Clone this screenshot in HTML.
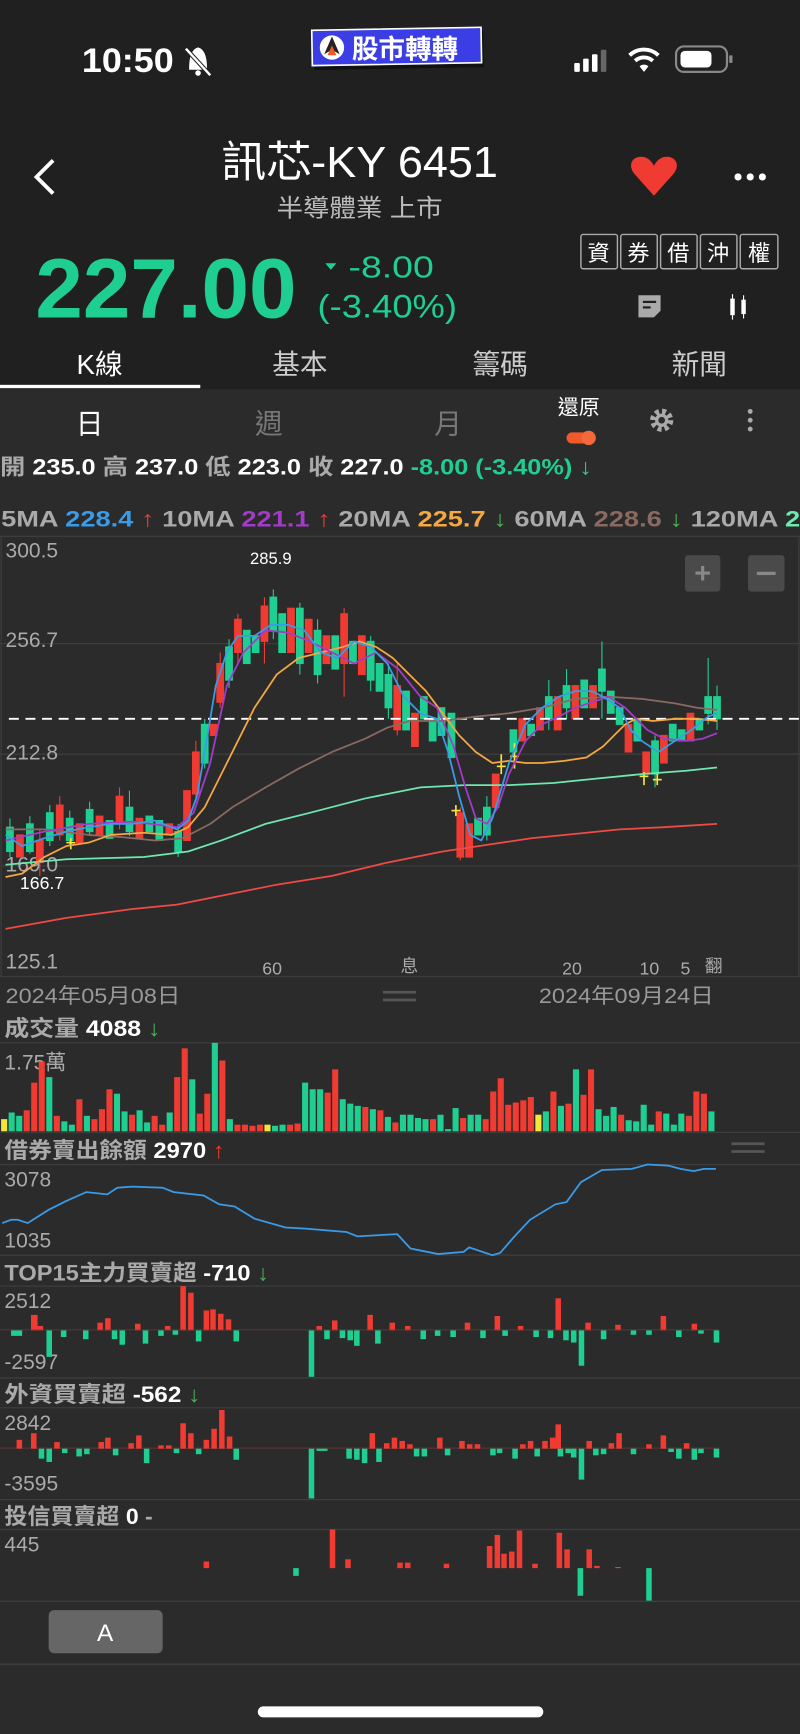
<!DOCTYPE html>
<html><head><meta charset="utf-8"><style>
html,body{margin:0;padding:0;background:#2b2b2b;}
svg{display:block;}
text{font-family:"Liberation Sans","Noto Sans CJK TC",sans-serif;}
</style></head><body>
<svg width="800" height="1734" viewBox="0 0 723 1568" preserveAspectRatio="none" xmlns="http://www.w3.org/2000/svg">
<rect x="0" y="0" width="723" height="1568" fill="#2b2b2b"/>
<rect x="0" y="0" width="723" height="352" fill="#202020"/>
<!-- status bar -->
<text x="74" y="65" font-size="31" fill="#fff" font-weight="bold" textLength="83" lengthAdjust="spacingAndGlyphs">10:50</text>
<g stroke="#fff" stroke-width="2.2" fill="#fff"><path d="M172 62 q0-16 7-18 q7 2 7 18 z"/><line x1="168" y1="44" x2="190" y2="68" stroke="#202020" stroke-width="4"/><line x1="168" y1="44" x2="190" y2="68"/></g>
<circle cx="179" cy="66" r="2.5" fill="#fff"/>
<rect x="284" y="29" width="153" height="33" fill="#111" transform="rotate(-1 360 45)"/>
<rect x="282" y="26" width="153" height="32" fill="#3a3ee4" stroke="#fff" stroke-width="1.5" transform="rotate(-1 360 42)"/>
<circle cx="300" cy="43" r="11" fill="#fff"/>
<path d="M300 33 L307 49 L300 45 L293 49 Z" fill="#222"/><path d="M300 41 L304 50 L296 50Z" fill="#f05a28"/>
<text x="318" y="53" font-size="24" fill="#fff" font-weight="bold">股市轉轉</text>
<g fill="#fff"><rect x="519" y="57" width="5" height="8" rx="1"/><rect x="527" y="53" width="5" height="12" rx="1"/><rect x="535" y="49" width="5" height="16" rx="1" fill="#fff"/><rect x="543" y="45" width="5" height="20" rx="1" fill="#666"/></g>
<path d="M569 50 a19 19 0 0 1 26 0" stroke="#fff" stroke-width="3.5" fill="none"/><path d="M574 55 a12 12 0 0 1 16 0" stroke="#fff" stroke-width="3.5" fill="none"/><path d="M578 60 l4 5 l4 -5 a6 6 0 0 0 -8 0z" fill="#fff"/>
<rect x="611" y="42" width="46" height="23" rx="7" fill="none" stroke="#888" stroke-width="2"/><rect x="615" y="46" width="28" height="15" rx="4" fill="#fff"/><rect x="659" y="50" width="3" height="7" rx="1" fill="#888"/>
<!-- title -->
<path d="M48 145 L33 160 L48 175" stroke="#fff" stroke-width="3.5" fill="none"/>
<text x="200" y="160" font-size="39" fill="#fff" textLength="250" lengthAdjust="spacingAndGlyphs">訊芯-KY 6451</text>
<text x="250" y="196" font-size="22" fill="#bbb" textLength="150" lengthAdjust="spacingAndGlyphs">半導體業 上市</text>
<path d="M591 177 L574 158 C566 149 572 140 582 142 C586 143 589 146 591 150 C593 146 596 143 600 142 C610 140 616 149 608 158 Z" fill="#ef3b32"/>
<g fill="#fff"><circle cx="667" cy="160" r="3.2"/><circle cx="678" cy="160" r="3.2"/><circle cx="689" cy="160" r="3.2"/></g>
<text x="32" y="287" font-size="76" fill="#1fcf92" font-weight="bold" textLength="236" lengthAdjust="spacingAndGlyphs">227.00</text>
<path d="M294 238 L304 238 L299 244Z" fill="#1fcf92"/>
<text x="315" y="251" font-size="28" fill="#1fcf92" textLength="77" lengthAdjust="spacingAndGlyphs">-8.00</text>
<text x="287" y="287" font-size="29" fill="#1fcf92" textLength="126" lengthAdjust="spacingAndGlyphs">(-3.40%)</text>
<g fill="none" stroke="#aaa" stroke-width="1.3"><rect x="525" y="212" width="33" height="31" rx="2"/><rect x="561" y="212" width="33" height="31" rx="2"/><rect x="597" y="212" width="33" height="31" rx="2"/><rect x="633" y="212" width="33" height="31" rx="2"/><rect x="669" y="212" width="34" height="31" rx="2"/></g>
<g font-size="20" fill="#fff" text-anchor="middle"><text x="541" y="236">資</text><text x="577" y="236">券</text><text x="613" y="236">借</text><text x="649" y="236">沖</text><text x="686" y="236">權</text></g>
<path d="M577 267 h20 v14 l-6 6 h-14z" fill="#aaa"/><rect x="581" y="272" width="12" height="2" fill="#202020"/><rect x="581" y="277" width="7" height="2" fill="#202020"/>
<g fill="#fff"><rect x="660" y="270" width="4" height="15"/><rect x="661.5" y="266" width="1" height="23"/><rect x="670" y="271" width="4" height="13"/><rect x="671.5" y="267" width="1" height="21"/></g>
<g font-size="25" text-anchor="middle"><text x="90" y="338" fill="#fff">K線</text><text x="271" y="338" fill="#ccc">基本</text><text x="452" y="338" fill="#ccc">籌碼</text><text x="632" y="338" fill="#ccc">新聞</text></g>
<rect x="0" y="348" width="181" height="3" fill="#fff"/>
<!-- period row -->
<g font-size="25" text-anchor="middle"><text x="81" y="392" fill="#fff">日</text><text x="243" y="392" fill="#777">週</text><text x="405" y="392" fill="#777">月</text></g>
<text x="523" y="375" font-size="19" fill="#fff" text-anchor="middle">還原</text>
<rect x="512" y="391" width="26" height="10" rx="5" fill="#f05a28"/><circle cx="532" cy="396" r="6.5" fill="#f26a3a"/>
<circle cx="598" cy="380" r="8" fill="none" stroke="#aaa" stroke-width="5" stroke-dasharray="3.5 2.8"/><circle cx="598" cy="380" r="6" fill="#aaa"/><circle cx="598" cy="380" r="3" fill="#2b2b2b"/>
<g fill="#aaa"><circle cx="678" cy="372" r="2.2"/><circle cx="678" cy="380" r="2.2"/><circle cx="678" cy="388" r="2.2"/></g>
<text x="0" y="429" font-size="20" font-weight="bold" textLength="535" lengthAdjust="spacingAndGlyphs"><tspan fill="#aaa">開</tspan><tspan fill="#fff"> 235.0 </tspan><tspan fill="#aaa">高</tspan><tspan fill="#fff"> 237.0 </tspan><tspan fill="#aaa">低</tspan><tspan fill="#fff"> 223.0 </tspan><tspan fill="#aaa">收</tspan><tspan fill="#fff"> 227.0 </tspan><tspan fill="#1fcf92"> -8.00 (-3.40%) ↓</tspan></text>
<text x="1" y="476" font-size="20" font-weight="bold" textLength="770" lengthAdjust="spacingAndGlyphs"><tspan fill="#aaa">5MA </tspan><tspan fill="#3a9be8">228.4 </tspan><tspan fill="#ef3b32">↑ </tspan><tspan fill="#aaa"> 10MA </tspan><tspan fill="#a23cc8">221.1 </tspan><tspan fill="#ef3b32">↑ </tspan><tspan fill="#aaa"> 20MA </tspan><tspan fill="#f5a742">225.7 </tspan><tspan fill="#4caf50">↓ </tspan><tspan fill="#aaa"> 60MA </tspan><tspan fill="#8a6a60">228.6 </tspan><tspan fill="#4caf50">↓ </tspan><tspan fill="#aaa"> 120MA </tspan><tspan fill="#6ee8b0">207.6</tspan></text>
<!-- chart frame -->
<g stroke="#3d3d3d" stroke-width="1.2"><line x1="0" y1="485" x2="723" y2="485"/><line x1="0" y1="582" x2="723" y2="582"/><line x1="0" y1="682" x2="723" y2="682"/><line x1="0" y1="783" x2="723" y2="783"/><line x1="0" y1="883" x2="723" y2="883"/><line x1="1" y1="485" x2="1" y2="883"/><line x1="722" y1="485" x2="722" y2="883"/></g>
<g font-size="19" fill="#aaa"><text x="5" y="504">300.5</text><text x="5" y="585">256.7</text><text x="5" y="687">212.8</text><text x="5" y="788">169.0</text><text x="5" y="876">125.1</text></g>
<text x="226" y="510" font-size="15" fill="#fff">285.9</text>
<text x="18" y="804" font-size="16" fill="#fff">166.7</text>
<g font-size="16" fill="#aaa"><text x="237" y="881">60</text><text x="362" y="879">息</text><text x="508" y="881">20</text><text x="578" y="881">10</text><text x="615" y="881">5</text><text x="637" y="879">翻</text></g>
<rect x="619" y="502" width="32" height="33" rx="3" fill="#4a4a4a"/><text x="635" y="527" font-size="26" fill="#888" text-anchor="middle" font-weight="bold">+</text>
<rect x="676" y="502" width="33" height="33" rx="3" fill="#4a4a4a"/><rect x="684" y="517" width="17" height="3" fill="#888"/>
<!-- candles -->
<g stroke-width="1">
<g fill="#1fcf92" stroke="#1fcf92">
<line x1="9" y1="740" x2="9" y2="775"/><rect x="6" y="748" width="6" height="22"/>
<line x1="27" y1="738" x2="27" y2="772"/><rect x="24" y="745" width="6" height="25"/>
<line x1="45" y1="728" x2="45" y2="765"/><rect x="42" y="735" width="6" height="25"/>
<line x1="63" y1="733" x2="63" y2="765"/><rect x="60" y="740" width="6" height="20"/>
<line x1="81" y1="725" x2="81" y2="756"/><rect x="78" y="732" width="6" height="20"/>
<rect x="96" y="742" width="6" height="16"/>
<line x1="117" y1="715" x2="117" y2="756"/><rect x="114" y="730" width="6" height="22"/>
<rect x="132" y="738" width="6" height="14"/><rect x="141" y="742" width="6" height="18"/>
<line x1="161" y1="745" x2="161" y2="775"/><rect x="158" y="752" width="6" height="18"/>
<line x1="185" y1="650" x2="185" y2="695"/><rect x="182" y="655" width="6" height="35"/>
<line x1="207" y1="578" x2="207" y2="622"/><rect x="204" y="585" width="6" height="30"/>
<rect x="220" y="570" width="6" height="30"/><rect x="228" y="575" width="6" height="15"/>
<line x1="247" y1="533" x2="247" y2="578"/><rect x="244" y="540" width="6" height="30"/>
<rect x="252" y="555" width="6" height="35"/><line x1="271" y1="545" x2="271" y2="610"/><rect x="268" y="550" width="6" height="50"/>
<line x1="287" y1="560" x2="287" y2="618"/><rect x="284" y="570" width="6" height="40"/>
<rect x="300" y="575" width="6" height="30"/><rect x="316" y="580" width="6" height="20"/>
<line x1="335" y1="575" x2="335" y2="625"/><rect x="332" y="580" width="6" height="35"/>
<rect x="340" y="600" width="6" height="25"/><line x1="351" y1="600" x2="351" y2="650"/><rect x="348" y="610" width="6" height="30"/>
<rect x="364" y="625" width="6" height="35"/><rect x="380" y="630" width="6" height="20"/><rect x="388" y="650" width="6" height="20"/><rect x="396" y="640" width="6" height="25"/>
<rect x="405" y="645" width="6" height="40"/>
<rect x="429" y="740" width="6" height="15"/><line x1="440" y1="720" x2="440" y2="760"/><rect x="437" y="730" width="6" height="25"/>
<rect x="461" y="660" width="6" height="20"/><rect x="477" y="655" width="6" height="10"/><line x1="496" y1="615" x2="496" y2="660"/><rect x="493" y="630" width="6" height="20"/>
<line x1="512" y1="605" x2="512" y2="650"/><rect x="509" y="620" width="6" height="20"/><rect x="525" y="615" width="6" height="25"/>
<line x1="544" y1="580" x2="544" y2="650"/><rect x="541" y="605" width="6" height="20"/><rect x="549" y="625" width="6" height="20"/><rect x="557" y="640" width="6" height="15"/>
<rect x="573" y="650" width="6" height="20"/><line x1="592" y1="665" x2="592" y2="712"/><rect x="589" y="670" width="6" height="30"/>
<rect x="605" y="655" width="6" height="15"/><rect x="613" y="660" width="6" height="10"/><rect x="629" y="650" width="6" height="10"/>
<line x1="640" y1="595" x2="640" y2="655"/><rect x="637" y="630" width="6" height="15"/><line x1="648" y1="620" x2="648" y2="660"/><rect x="645" y="630" width="6" height="20"/>
</g>
<g fill="#ef3b32" stroke="#ef3b32">
<rect x="15" y="755" width="6" height="20"/><line x1="36" y1="750" x2="36" y2="792"/><rect x="33" y="760" width="6" height="20"/>
<line x1="54" y1="720" x2="54" y2="760"/><rect x="51" y="728" width="6" height="27"/><rect x="69" y="745" width="6" height="17"/>
<rect x="87" y="738" width="6" height="17"/><line x1="108" y1="712" x2="108" y2="750"/><rect x="105" y="720" width="6" height="25"/>
<rect x="123" y="740" width="6" height="18"/><rect x="150" y="745" width="6" height="10"/>
<rect x="166" y="715" width="6" height="45"/><line x1="177" y1="670" x2="177" y2="725"/><rect x="174" y="680" width="6" height="38"/>
<rect x="190" y="655" width="6" height="10"/><line x1="199" y1="590" x2="199" y2="640"/><rect x="196" y="600" width="6" height="35"/>
<line x1="215" y1="555" x2="215" y2="600"/><rect x="212" y="560" width="6" height="30"/>
<line x1="239" y1="540" x2="239" y2="600"/><rect x="236" y="548" width="6" height="32"/>
<rect x="260" y="550" width="6" height="40"/><rect x="276" y="560" width="6" height="30"/><rect x="292" y="575" width="6" height="25"/>
<line x1="311" y1="550" x2="311" y2="630"/><rect x="308" y="555" width="6" height="45"/><rect x="324" y="575" width="6" height="35"/>
<line x1="359" y1="600" x2="359" y2="665"/><rect x="356" y="620" width="6" height="40"/><rect x="372" y="645" width="6" height="30"/>
<line x1="416" y1="730" x2="416" y2="778"/><rect x="413" y="735" width="6" height="40"/><rect x="421" y="745" width="6" height="30"/>
<rect x="445" y="700" width="6" height="30"/><rect x="469" y="650" width="6" height="20"/><rect x="485" y="640" width="6" height="20"/>
<rect x="501" y="630" width="6" height="30"/><rect x="517" y="620" width="6" height="30"/><rect x="533" y="620" width="6" height="20"/>
<rect x="565" y="655" width="6" height="25"/><rect x="581" y="680" width="6" height="20"/><rect x="597" y="665" width="6" height="25"/><rect x="621" y="645" width="6" height="25"/>
</g>
<g stroke="#f5e63c" stroke-width="1.5"><line x1="453" y1="682" x2="453" y2="700"/><line x1="449" y1="693" x2="457" y2="693"/><line x1="465" y1="672" x2="465" y2="695"/><line x1="461" y1="684" x2="469" y2="684"/><line x1="64" y1="758" x2="64" y2="768"/><line x1="60" y1="762" x2="68" y2="762"/><line x1="412" y1="728" x2="412" y2="738"/><line x1="408" y1="733" x2="416" y2="733"/><line x1="582" y1="698" x2="582" y2="710"/><line x1="578" y1="702" x2="586" y2="702"/><line x1="594" y1="700" x2="594" y2="710"/><line x1="590" y1="705" x2="598" y2="705"/></g>
</g>
<line x1="8" y1="650" x2="723" y2="650" stroke="#fff" stroke-width="1.6" stroke-dasharray="9 6"/>
<g fill="none" stroke-width="1.6" stroke-linejoin="round">
<polyline stroke="#ef4a45" points="5,840 60,830 120,822 160,818 200,810 250,800 300,792 350,780 400,770 440,764 480,758 520,754 560,750 600,748 648,745"/>
<polyline stroke="#6ee8b0" points="5,782 60,777 130,775 170,770 200,760 240,745 280,735 330,722 380,712 420,710 460,710 500,708 540,704 580,700 620,697 648,694"/>
<polyline stroke="#8a6a60" points="5,750 40,750 80,755 110,757 140,760 165,758 190,745 210,730 240,712 270,695 300,680 330,668 350,658 370,652 400,652 430,648 460,645 490,640 520,632 550,630 580,632 610,636 630,640 648,642"/>
<polyline stroke="#f5a742" points="5,793 20,790 40,775 60,765 80,762 100,755 130,753 155,755 170,748 185,730 200,700 215,670 230,640 250,610 270,595 290,590 310,585 325,580 340,585 355,595 370,610 385,625 400,645 415,665 430,680 445,690 460,688 475,690 490,690 510,688 530,685 545,675 555,665 565,655 575,650 590,652 610,650 630,650 648,652"/>
<polyline stroke="#a23cc8" points="5,760 40,752 80,745 120,743 160,748 175,735 190,690 205,620 220,590 240,570 260,572 280,580 300,590 320,600 340,590 360,605 380,630 395,640 410,675 420,710 430,740 440,745 450,730 460,700 475,670 490,655 505,648 520,640 535,635 550,630 565,640 585,660 600,668 620,670 635,668 648,663"/>
<polyline stroke="#3a9be8" points="5,755 20,765 40,758 60,752 80,748 100,745 120,745 140,742 160,750 170,742 178,720 185,680 195,620 205,590 215,575 230,575 245,565 260,565 275,570 290,590 305,595 320,580 335,585 350,600 365,630 380,645 395,650 405,680 415,720 425,755 435,760 445,740 460,690 475,655 490,640 505,630 520,625 535,625 545,630 560,640 570,660 580,670 595,680 610,670 625,660 640,648 648,645"/>
</g>
<!-- date row -->
<g font-size="19" fill="#999"><text x="5" y="907" textLength="158" lengthAdjust="spacingAndGlyphs">2024年05月08日</text><text x="487" y="907" textLength="158" lengthAdjust="spacingAndGlyphs">2024年09月24日</text></g>
<g fill="#555"><rect x="346" y="896" width="30" height="2.5"/><rect x="346" y="903" width="30" height="2.5"/></g>
<!-- volume -->
<text x="4" y="937" font-size="20" font-weight="bold" textLength="141" lengthAdjust="spacingAndGlyphs"><tspan fill="#aaa">成交量 </tspan><tspan fill="#fff">4088 </tspan><tspan fill="#4caf50">↓</tspan></text>
<g stroke="#3d3d3d" stroke-width="1.2"><line x1="0" y1="943" x2="723" y2="943"/><line x1="0" y1="1024" x2="723" y2="1024"/></g>
<text x="4" y="967" font-size="19" fill="#aaa">1.75萬</text>
<g>
<rect x="1" y="1012" width="5.5" height="11" fill="#f5e63c"/><rect x="7.8" y="1006" width="5.5" height="17" fill="#1fcf92"/><rect x="14.6" y="1009" width="5.5" height="14" fill="#1fcf92"/><rect x="21.4" y="1004" width="5.5" height="19" fill="#ef3b32"/><rect x="28.2" y="979" width="5.5" height="44" fill="#ef3b32"/><rect x="35" y="960" width="5.5" height="63" fill="#ef3b32"/><rect x="41.8" y="974" width="5.5" height="49" fill="#1fcf92"/><rect x="48.6" y="1009" width="5.5" height="14" fill="#ef3b32"/><rect x="55.4" y="1014" width="5.5" height="9" fill="#1fcf92"/><rect x="62.2" y="1017" width="5.5" height="6" fill="#1fcf92"/>
<rect x="69" y="994" width="5.5" height="29" fill="#ef3b32"/><rect x="75.8" y="1009" width="5.5" height="14" fill="#1fcf92"/><rect x="82.6" y="1012" width="5.5" height="11" fill="#ef3b32"/><rect x="89.4" y="1003" width="5.5" height="20" fill="#ef3b32"/><rect x="96.2" y="985" width="5.5" height="38" fill="#ef3b32"/><rect x="103" y="989" width="5.5" height="34" fill="#1fcf92"/><rect x="109.8" y="1005" width="5.5" height="18" fill="#1fcf92"/><rect x="116.6" y="1008" width="5.5" height="15" fill="#ef3b32"/><rect x="123.4" y="1004" width="5.5" height="19" fill="#1fcf92"/><rect x="130.2" y="1015" width="5.5" height="8" fill="#1fcf92"/>
<rect x="137" y="1009" width="5.5" height="14" fill="#ef3b32"/><rect x="143.8" y="1017" width="5.5" height="6" fill="#ef3b32"/><rect x="150.6" y="1006" width="5.5" height="17" fill="#1fcf92"/><rect x="157.4" y="974" width="5.5" height="49" fill="#ef3b32"/><rect x="164.2" y="948" width="5.5" height="75" fill="#ef3b32"/><rect x="171" y="976" width="5.5" height="47" fill="#1fcf92"/><rect x="177.8" y="1007" width="5.5" height="16" fill="#ef3b32"/><rect x="184.6" y="989" width="5.5" height="34" fill="#ef3b32"/><rect x="191.4" y="943" width="5.5" height="80" fill="#1fcf92"/><rect x="198.2" y="959" width="5.5" height="64" fill="#ef3b32"/>
<rect x="205" y="1012" width="5.5" height="11" fill="#1fcf92"/><rect x="211.8" y="1017" width="5.5" height="6" fill="#ef3b32"/><rect x="218.6" y="1017" width="5.5" height="6" fill="#ef3b32"/><rect x="225.4" y="1018" width="5.5" height="5" fill="#ef3b32"/><rect x="232.2" y="1017" width="5.5" height="6" fill="#ef3b32"/><rect x="239" y="1017" width="5.5" height="6" fill="#f5e63c"/><rect x="245.8" y="1018" width="5.5" height="5" fill="#1fcf92"/><rect x="252.6" y="1017" width="5.5" height="6" fill="#1fcf92"/><rect x="259.4" y="1017" width="5.5" height="6" fill="#ef3b32"/><rect x="266.2" y="1016" width="5.5" height="7" fill="#ef3b32"/>
<rect x="273" y="979" width="5.5" height="44" fill="#1fcf92"/><rect x="279.8" y="985" width="5.5" height="38" fill="#1fcf92"/><rect x="286.6" y="985" width="5.5" height="38" fill="#1fcf92"/><rect x="293.4" y="988" width="5.5" height="35" fill="#ef3b32"/><rect x="300.2" y="967" width="5.5" height="56" fill="#ef3b32"/><rect x="307" y="994" width="5.5" height="29" fill="#1fcf92"/><rect x="313.8" y="998" width="5.5" height="25" fill="#1fcf92"/><rect x="320.6" y="1000" width="5.5" height="23" fill="#1fcf92"/><rect x="327.4" y="1001" width="5.5" height="22" fill="#ef3b32"/><rect x="334.2" y="1003" width="5.5" height="20" fill="#1fcf92"/>
<rect x="341" y="1004" width="5.5" height="19" fill="#ef3b32"/><rect x="347.8" y="1010" width="5.5" height="13" fill="#1fcf92"/><rect x="354.6" y="1015" width="5.5" height="8" fill="#ef3b32"/><rect x="361.4" y="1008" width="5.5" height="15" fill="#1fcf92"/><rect x="368.2" y="1008" width="5.5" height="15" fill="#1fcf92"/><rect x="375" y="1011" width="5.5" height="12" fill="#1fcf92"/><rect x="381.8" y="1012" width="5.5" height="11" fill="#1fcf92"/><rect x="388.6" y="1012" width="5.5" height="11" fill="#ef3b32"/><rect x="395.4" y="1008" width="5.5" height="15" fill="#1fcf92"/><rect x="402.2" y="1021" width="5.5" height="2" fill="#1fcf92"/>
<rect x="409" y="1002" width="5.5" height="21" fill="#1fcf92"/><rect x="415.8" y="1011" width="5.5" height="12" fill="#ef3b32"/><rect x="422.6" y="1008" width="5.5" height="15" fill="#1fcf92"/><rect x="429.4" y="1008" width="5.5" height="15" fill="#1fcf92"/><rect x="436.2" y="1012" width="5.5" height="11" fill="#ef3b32"/><rect x="443" y="987" width="5.5" height="36" fill="#ef3b32"/><rect x="449.8" y="975" width="5.5" height="48" fill="#ef3b32"/><rect x="456.6" y="999" width="5.5" height="24" fill="#ef3b32"/><rect x="463.4" y="997" width="5.5" height="26" fill="#ef3b32"/><rect x="470.2" y="995" width="5.5" height="28" fill="#ef3b32"/>
<rect x="477" y="992" width="5.5" height="31" fill="#ef3b32"/><rect x="483.8" y="1008" width="5.5" height="15" fill="#f5e63c"/><rect x="490.6" y="1005" width="5.5" height="18" fill="#1fcf92"/><rect x="497.4" y="987" width="5.5" height="36" fill="#ef3b32"/><rect x="504.2" y="1000" width="5.5" height="23" fill="#1fcf92"/><rect x="511" y="998" width="5.5" height="25" fill="#ef3b32"/><rect x="517.8" y="967" width="5.5" height="56" fill="#1fcf92"/><rect x="524.6" y="990" width="5.5" height="33" fill="#ef3b32"/><rect x="531.4" y="967" width="5.5" height="56" fill="#ef3b32"/><rect x="538.2" y="1003" width="5.5" height="20" fill="#1fcf92"/>
<rect x="545" y="1009" width="5.5" height="14" fill="#1fcf92"/><rect x="551.8" y="1001" width="5.5" height="22" fill="#1fcf92"/><rect x="558.6" y="1008" width="5.5" height="15" fill="#ef3b32"/><rect x="565.4" y="1013" width="5.5" height="10" fill="#1fcf92"/><rect x="572.2" y="1014" width="5.5" height="9" fill="#1fcf92"/><rect x="579" y="999" width="5.5" height="24" fill="#1fcf92"/><rect x="585.8" y="1017" width="5.5" height="6" fill="#1fcf92"/><rect x="592.6" y="1005" width="5.5" height="18" fill="#ef3b32"/><rect x="599.4" y="1007" width="5.5" height="16" fill="#1fcf92"/><rect x="606.2" y="1017" width="5.5" height="6" fill="#1fcf92"/>
<rect x="613" y="1007" width="5.5" height="16" fill="#1fcf92"/><rect x="619.8" y="1009" width="5.5" height="14" fill="#ef3b32"/><rect x="626.6" y="987" width="5.5" height="36" fill="#ef3b32"/><rect x="633.4" y="989" width="5.5" height="34" fill="#ef3b32"/><rect x="640.2" y="1005" width="5.5" height="18" fill="#1fcf92"/>
</g>
<!-- borrow -->
<text x="4" y="1047" font-size="20" font-weight="bold" textLength="199" lengthAdjust="spacingAndGlyphs"><tspan fill="#aaa">借券賣出餘額 </tspan><tspan fill="#fff">2970 </tspan><tspan fill="#ef3b32">↑</tspan></text>
<g fill="#555"><rect x="661" y="1033" width="30" height="2.5"/><rect x="661" y="1040" width="30" height="2.5"/></g>
<g stroke="#3d3d3d" stroke-width="1.2"><line x1="0" y1="1053" x2="723" y2="1053"/><line x1="0" y1="1135" x2="723" y2="1135"/></g>
<g font-size="19" fill="#aaa"><text x="4" y="1073">3078</text><text x="4" y="1128">1035</text></g>
<polyline fill="none" stroke="#3a9be8" stroke-width="1.6" points="2,1106 10,1103 16,1103 25,1106 44,1094 60,1086 78,1078 97,1080 106,1074 120,1073 147,1074 157,1078 184,1081 198,1089 212,1091 230,1102 258,1110 276,1111 313,1114 323,1118 359,1116 371,1129 396,1134 419,1132 424,1128 445,1135 452,1133 465,1118 479,1103 502,1089 512,1087 525,1069 544,1058 571,1057 585,1053 604,1054 615,1057 627,1059 636,1057 647,1057"/>
<!-- TOP15 -->
<text x="4" y="1158" font-size="20" font-weight="bold" textLength="239" lengthAdjust="spacingAndGlyphs"><tspan fill="#aaa">TOP15主力買賣超 </tspan><tspan fill="#fff">-710 </tspan><tspan fill="#4caf50">↓</tspan></text>
<g stroke="#3d3d3d" stroke-width="1.2"><line x1="0" y1="1163" x2="723" y2="1163"/><line x1="0" y1="1246" x2="723" y2="1246"/><line x1="0" y1="1356" x2="723" y2="1356"/><line x1="0" y1="1273" x2="723" y2="1273"/><line x1="0" y1="1383" x2="723" y2="1383"/><line x1="0" y1="1448" x2="723" y2="1448"/><line x1="0" y1="1506" x2="723" y2="1506"/></g>
<g font-size="19" fill="#aaa"><text x="4" y="1183">2512</text><text x="4" y="1238">-2597</text></g>
<g>
<rect x="28" y="1189" width="6" height="14" fill="#ef3b32"/><rect x="42" y="1203" width="5" height="24" fill="#1fcf92"/><rect x="10" y="1203" width="10" height="5" fill="#1fcf92"/><rect x="34" y="1199" width="5" height="4" fill="#ef3b32"/><rect x="55" y="1203" width="5" height="6" fill="#1fcf92"/>
<rect x="75" y="1203" width="5" height="8" fill="#1fcf92"/><rect x="88" y="1196" width="5" height="7" fill="#ef3b32"/><rect x="95" y="1192" width="5" height="11" fill="#ef3b32"/><rect x="101" y="1203" width="5" height="8" fill="#1fcf92"/><rect x="108" y="1203" width="5" height="13" fill="#1fcf92"/><rect x="122" y="1197" width="5" height="6" fill="#ef3b32"/><rect x="129" y="1203" width="5" height="12" fill="#1fcf92"/><rect x="143" y="1203" width="5" height="5" fill="#1fcf92"/><rect x="149" y="1199" width="5" height="4" fill="#ef3b32"/><rect x="156" y="1203" width="5" height="4" fill="#1fcf92"/>
<rect x="163" y="1163" width="5" height="40" fill="#ef3b32"/><rect x="170" y="1169" width="5" height="34" fill="#ef3b32"/><rect x="177" y="1203" width="5" height="10" fill="#1fcf92"/><rect x="184" y="1185" width="5" height="18" fill="#ef3b32"/><rect x="190" y="1184" width="5" height="19" fill="#ef3b32"/><rect x="197" y="1188" width="5" height="15" fill="#ef3b32"/><rect x="204" y="1193" width="5" height="10" fill="#ef3b32"/><rect x="211" y="1203" width="5" height="10" fill="#1fcf92"/>
<rect x="279" y="1203" width="5" height="42" fill="#1fcf92"/><rect x="286" y="1199" width="5" height="4" fill="#ef3b32"/><rect x="293" y="1203" width="5" height="8" fill="#1fcf92"/><rect x="300" y="1194" width="5" height="9" fill="#ef3b32"/><rect x="307" y="1203" width="5" height="7" fill="#1fcf92"/><rect x="314" y="1203" width="5" height="9" fill="#1fcf92"/><rect x="320" y="1203" width="5" height="14" fill="#1fcf92"/><rect x="332" y="1189" width="5" height="14" fill="#ef3b32"/><rect x="339" y="1203" width="5" height="12" fill="#1fcf92"/><rect x="352" y="1196" width="5" height="7" fill="#ef3b32"/><rect x="366" y="1199" width="5" height="4" fill="#ef3b32"/><rect x="380" y="1203" width="5" height="8" fill="#1fcf92"/><rect x="393" y="1203" width="5" height="5" fill="#1fcf92"/><rect x="407" y="1203" width="5" height="6" fill="#1fcf92"/><rect x="420" y="1196" width="5" height="7" fill="#ef3b32"/><rect x="434" y="1203" width="5" height="7" fill="#1fcf92"/><rect x="447" y="1190" width="5" height="13" fill="#ef3b32"/><rect x="454" y="1203" width="5" height="5" fill="#1fcf92"/><rect x="468" y="1199" width="5" height="4" fill="#ef3b32"/><rect x="482" y="1203" width="5" height="6" fill="#1fcf92"/><rect x="495" y="1203" width="5" height="7" fill="#1fcf92"/>
<rect x="502" y="1174" width="5" height="29" fill="#ef3b32"/><rect x="509" y="1203" width="5" height="9" fill="#1fcf92"/><rect x="516" y="1203" width="5" height="11" fill="#1fcf92"/><rect x="523" y="1203" width="5" height="32" fill="#1fcf92"/><rect x="529" y="1196" width="5" height="7" fill="#ef3b32"/><rect x="543" y="1203" width="5" height="8" fill="#1fcf92"/><rect x="556" y="1198" width="5" height="5" fill="#ef3b32"/><rect x="570" y="1203" width="5" height="4" fill="#1fcf92"/><rect x="584" y="1203" width="5" height="4" fill="#1fcf92"/><rect x="597" y="1190" width="5" height="13" fill="#ef3b32"/><rect x="611" y="1203" width="5" height="6" fill="#1fcf92"/><rect x="625" y="1197" width="5" height="6" fill="#ef3b32"/><rect x="631" y="1203" width="5" height="3" fill="#1fcf92"/><rect x="645" y="1203" width="5" height="11" fill="#1fcf92"/>
<rect x="0" y="1202" width="650" height="1" fill="#7a3a3a" opacity="0.6"/>
</g>
<!-- foreign -->
<text x="4" y="1268" font-size="20" font-weight="bold" textLength="177" lengthAdjust="spacingAndGlyphs"><tspan fill="#aaa">外資買賣超 </tspan><tspan fill="#fff">-562 </tspan><tspan fill="#4caf50">↓</tspan></text>
<g font-size="19" fill="#aaa"><text x="4" y="1293">2842</text><text x="4" y="1348">-3595</text></g>
<g>
<rect x="0" y="1309" width="650" height="1" fill="#7a3a3a" opacity="0.6"/>
<rect x="15" y="1302" width="5" height="8" fill="#ef3b32"/><rect x="28" y="1296" width="5" height="14" fill="#ef3b32"/><rect x="35" y="1310" width="5" height="9" fill="#1fcf92"/><rect x="42" y="1310" width="5" height="12" fill="#1fcf92"/><rect x="49" y="1304" width="5" height="6" fill="#ef3b32"/><rect x="56" y="1310" width="5" height="4" fill="#1fcf92"/><rect x="69" y="1310" width="5" height="7" fill="#1fcf92"/><rect x="76" y="1310" width="5" height="5" fill="#1fcf92"/><rect x="89" y="1304" width="5" height="6" fill="#ef3b32"/><rect x="95" y="1300" width="5" height="10" fill="#ef3b32"/><rect x="102" y="1310" width="5" height="6" fill="#1fcf92"/><rect x="116" y="1305" width="5" height="5" fill="#ef3b32"/><rect x="123" y="1298" width="5" height="12" fill="#ef3b32"/><rect x="130" y="1310" width="5" height="13" fill="#1fcf92"/><rect x="143" y="1307" width="5" height="3" fill="#ef3b32"/><rect x="150" y="1307" width="5" height="3" fill="#ef3b32"/><rect x="157" y="1310" width="5" height="4" fill="#1fcf92"/>
<rect x="163" y="1287" width="5" height="23" fill="#ef3b32"/><rect x="170" y="1296" width="5" height="14" fill="#ef3b32"/><rect x="177" y="1310" width="5" height="5" fill="#1fcf92"/><rect x="184" y="1302" width="5" height="8" fill="#ef3b32"/><rect x="191" y="1292" width="5" height="18" fill="#ef3b32"/><rect x="198" y="1275" width="5" height="35" fill="#ef3b32"/><rect x="205" y="1299" width="5" height="11" fill="#ef3b32"/><rect x="211" y="1310" width="5" height="10" fill="#1fcf92"/>
<rect x="279" y="1310" width="5" height="45" fill="#1fcf92"/><rect x="286" y="1310" width="10" height="2" fill="#1fcf92"/><rect x="313" y="1310" width="5" height="9" fill="#1fcf92"/><rect x="320" y="1310" width="5" height="10" fill="#1fcf92"/><rect x="327" y="1310" width="5" height="13" fill="#1fcf92"/><rect x="334" y="1296" width="5" height="14" fill="#ef3b32"/><rect x="340" y="1310" width="5" height="12" fill="#1fcf92"/><rect x="347" y="1305" width="5" height="5" fill="#ef3b32"/><rect x="354" y="1300" width="5" height="10" fill="#ef3b32"/><rect x="361" y="1303" width="5" height="7" fill="#ef3b32"/><rect x="368" y="1306" width="5" height="4" fill="#ef3b32"/><rect x="374" y="1310" width="5" height="7" fill="#1fcf92"/><rect x="381" y="1310" width="5" height="7" fill="#1fcf92"/><rect x="395" y="1300" width="5" height="10" fill="#ef3b32"/><rect x="402" y="1310" width="5" height="6" fill="#1fcf92"/><rect x="415" y="1303" width="5" height="7" fill="#ef3b32"/><rect x="422" y="1306" width="5" height="4" fill="#ef3b32"/><rect x="429" y="1306" width="5" height="4" fill="#ef3b32"/><rect x="443" y="1310" width="5" height="6" fill="#1fcf92"/><rect x="449" y="1310" width="5" height="4" fill="#1fcf92"/><rect x="463" y="1310" width="5" height="9" fill="#1fcf92"/><rect x="470" y="1306" width="5" height="4" fill="#ef3b32"/><rect x="477" y="1303" width="5" height="7" fill="#ef3b32"/><rect x="483" y="1310" width="5" height="7" fill="#1fcf92"/><rect x="490" y="1303" width="5" height="7" fill="#ef3b32"/><rect x="497" y="1300" width="5" height="10" fill="#ef3b32"/><rect x="504" y="1310" width="5" height="7" fill="#1fcf92"/><rect x="511" y="1310" width="5" height="4" fill="#1fcf92"/>
<rect x="502" y="1288" width="5" height="22" fill="#ef3b32"/><rect x="516" y="1310" width="5" height="8" fill="#1fcf92"/><rect x="523" y="1310" width="5" height="28" fill="#1fcf92"/><rect x="530" y="1303" width="5" height="7" fill="#ef3b32"/><rect x="536" y="1310" width="5" height="6" fill="#1fcf92"/><rect x="543" y="1310" width="5" height="5" fill="#1fcf92"/><rect x="550" y="1305" width="5" height="5" fill="#ef3b32"/><rect x="557" y="1296" width="5" height="14" fill="#ef3b32"/><rect x="570" y="1310" width="5" height="5" fill="#1fcf92"/><rect x="584" y="1306" width="5" height="4" fill="#ef3b32"/><rect x="597" y="1298" width="5" height="12" fill="#ef3b32"/><rect x="604" y="1310" width="5" height="3" fill="#1fcf92"/><rect x="611" y="1310" width="5" height="9" fill="#1fcf92"/><rect x="618" y="1305" width="5" height="5" fill="#ef3b32"/><rect x="625" y="1310" width="5" height="10" fill="#1fcf92"/><rect x="631" y="1310" width="5" height="4" fill="#1fcf92"/><rect x="645" y="1310" width="5" height="8" fill="#1fcf92"/>
</g>
<!-- trust -->
<text x="4" y="1378" font-size="20" font-weight="bold" textLength="134" lengthAdjust="spacingAndGlyphs"><tspan fill="#aaa">投信買賣超 </tspan><tspan fill="#fff">0 </tspan><tspan fill="#aaa">-</tspan></text>
<svg x="0" y="1383" width="723" height="65" viewBox="0 1383 723 65">
<text x="4" y="1403" font-size="19" fill="#aaa">445</text>
<text x="4" y="1462" font-size="19" fill="#aaa">-355</text>
<g fill="#ef3b32"><rect x="184" y="1412" width="5" height="6"/><rect x="298" y="1383" width="5" height="35"/><rect x="312" y="1410" width="5" height="8"/><rect x="359" y="1413" width="5" height="5"/><rect x="366" y="1413" width="5" height="5"/><rect x="401" y="1414" width="5" height="4"/><rect x="440" y="1398" width="5" height="20"/><rect x="447" y="1388" width="5" height="30"/><rect x="453" y="1405" width="5" height="13"/><rect x="460" y="1403" width="5" height="15"/><rect x="467" y="1384" width="5" height="34"/><rect x="481" y="1414" width="5" height="4"/><rect x="503" y="1386" width="5" height="32"/><rect x="510" y="1401" width="5" height="17"/><rect x="530" y="1401" width="5" height="17"/><rect x="537" y="1416" width="5" height="2"/><rect x="556" y="1417" width="5" height="1"/></g>
<g fill="#1fcf92"><rect x="265" y="1418" width="5" height="7"/><rect x="522" y="1418" width="5" height="25"/><rect x="584" y="1418" width="5" height="30"/></g>
</svg>
<!-- bottom -->
<rect x="0" y="1448" width="723" height="120" fill="#2b2b2b"/>
<line x1="0" y1="1448" x2="723" y2="1448" stroke="#3d3d3d" stroke-width="1.2"/>
<line x1="0" y1="1505" x2="723" y2="1505" stroke="#3d3d3d" stroke-width="1.5"/>
<rect x="44" y="1456" width="103" height="39" rx="5" fill="#666"/>
<text x="95" y="1484" font-size="22" fill="#fff" text-anchor="middle">A</text>
<rect x="233" y="1543" width="258" height="10" rx="5" fill="#fff"/>
</svg>
</body></html>
